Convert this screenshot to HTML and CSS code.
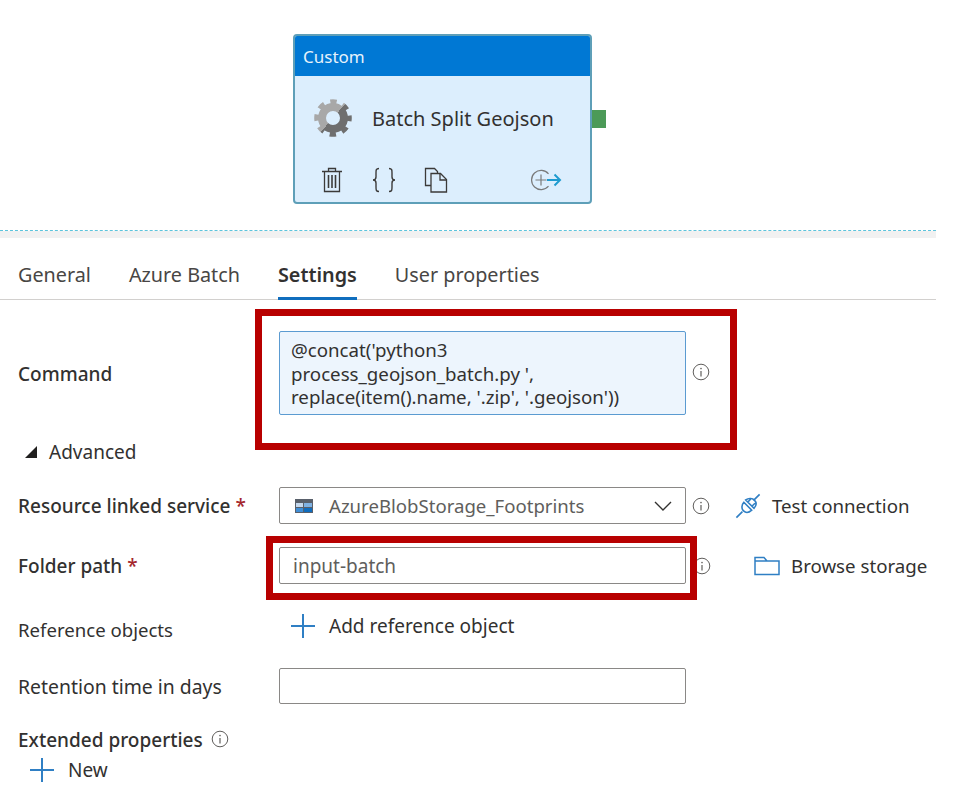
FILE: index.html
```html
<!DOCTYPE html>
<html lang="en">
<head>
    <meta charset="UTF-8">
    <title>Batch Split Geojson</title>
    <link rel="stylesheet" href="styles.css">
</head>
<body>
    <svg class="defs" width="0" height="0">
        <symbol id="info" viewBox="0 0 18 18">
            <circle cx="9" cy="9" r="7.8" fill="none" stroke="#605e5c" stroke-width="1"/>
            <path d="M9 8v5.5" stroke="#605e5c" stroke-width="1.2" fill="none"/>
            <circle cx="9" cy="5.6" r="0.8" fill="#605e5c"/>
        </symbol>
        <symbol id="plus" viewBox="0 0 24 24">
            <path d="M12 0v24M0 12h24" stroke="#2f7fc4" stroke-width="2" fill="none"/>
        </symbol>
        <linearGradient id="gear-tone" gradientUnits="userSpaceOnUse" x1="4" y1="6" x2="34" y2="32">
            <stop offset="0.5" stop-color="#a8a8a8"/>
            <stop offset="0.5" stop-color="#6f6f6f"/>
        </linearGradient>
    </svg>

    <div class="canvas">
        <div class="node-wrap">
            <div class="node">
                <div class="node-type">Custom</div>
                <div class="node-body">
                    <svg class="gear" width="38" height="38" viewBox="0 0 38 38">
                        <circle cx="19" cy="19" r="16.3" fill="none" stroke="url(#gear-tone)" stroke-width="5" stroke-dasharray="6.4 6.4" stroke-dashoffset="3.2"/>
                        <circle cx="19" cy="19" r="11" fill="none" stroke="url(#gear-tone)" stroke-width="8"/>
                    </svg>
                    <span class="node-name">Batch Split Geojson</span>
                </div>
                <div class="node-actions">
                    <svg width="22" height="26" viewBox="0 0 22 26" fill="none" stroke="#3b3a39" stroke-width="1.3">
                        <path d="M1 4.5h20M7.5 4.5V1.5h7v3M3.5 4.5v20h15v-20"/>
                        <path d="M7.5 8v13M11 8v13M14.5 8v13" stroke-width="1.6"/>
                    </svg>
                    <svg class="braces" width="24" height="26" viewBox="0 0 24 26" fill="none" stroke="#3b3a39" stroke-width="1.4">
                        <path d="M7 1.500C4 1.500 4 3 4 6v4c0 2-1 3-3 3 2 0 3 1 3 3v4c0 3 0 4.500 3 4.500"/>
                        <path d="M17 1.500c3 0 3 1.500 3 4.500v4c0 2 1 3 3 3-2 0-3 1-3 3v4c0 3 0 4.500-3 4.500"/>
                    </svg>
                    <svg class="copy-icon" width="24" height="26" viewBox="0 0 24 26" fill="none" stroke="#3b3a39" stroke-width="1.3">
                        <path d="M7 18.500H1.500V1.500h9l3 3v2"/>
                        <path d="M7 6.500h9.500l6 6v12.500H7z"/>
                        <path d="M16 6.500v6.500h6.500"/>
                    </svg>
                    <svg class="add-icon" width="32" height="22" viewBox="0 0 32 22" fill="none">
                        <path d="M18.500 4.800A9.600 9.600 0 1 0 18.500 17.200" stroke="#7a7a7a" stroke-width="1.2"/>
                        <path d="M5.500 11h11M11 5.500v11" stroke="#7a7a7a" stroke-width="1.2"/>
                        <path d="M17 11h13M24.500 5.500l5.500 5.500-5.500 5.500" stroke="#1f9bcf" stroke-width="2"/>
                    </svg>
                </div>
            </div>
            <div class="node-port"></div>
        </div>
    </div>

    <div class="panel">
        <div class="tabs">
            <span class="tab">General</span>
            <span class="tab">Azure Batch</span>
            <span class="tab active">Settings</span>
            <span class="tab">User properties</span>
        </div>

        <div class="row row-command">
            <label class="field-label strong">Command</label>
            <div class="boxed">
                <div class="textbox">@concat('python3<br>process_geojson_batch.py ',<br>replace(item().name, '.zip', '.geojson'))</div>
                <div class="red-box red-command"></div>
            </div>
            <svg class="info"><use href="#info"/></svg>
        </div>

        <div class="advanced"><span class="caret"></span>Advanced</div>

        <div class="row row-resource">
            <label class="field-label strong">Resource linked service <span class="req">*</span></label>
            <div class="input select">
                <svg width="18" height="16" viewBox="0 0 18 16">
                    <path d="M0 1h18v14H0z" fill="#59606b"/>
                    <path d="M1 5h7v4H1z" fill="#c5d9ee"/>
                    <path d="M9 5h8v4H9z" fill="#7fb2e3"/>
                    <path d="M1 10h7v4H1z" fill="#3f8ed6"/>
                    <path d="M9 10h8v4H9z" fill="#0f6cbd"/>
                </svg>
                <span class="select-value">AzureBlobStorage_Footprints</span>
                <svg class="chevron" width="20" height="12" viewBox="0 0 20 12"><path d="M2 2l8 8 8-8" fill="none" stroke="#323130" stroke-width="1.400"/></svg>
            </div>
            <svg class="info"><use href="#info"/></svg>
            <svg class="plug" width="26" height="28" viewBox="0 0 28 28" fill="none" stroke="#2f7fc4" stroke-width="1.700">
                <path d="M1.500 26.500l6.500-6.500M26.500 1.500L20 8"/>
                <path d="M9.500 10l8.500 8.500c-3 2.700-6.500 3-8.800.8S6.800 13 9.500 10z"/>
                <path d="M14 9.500l3-3M18.500 14l3-3M11.500 7.500l9 9c2.500-3 2.700-6.500.6-8.600S15 5 11.500 7.500z"/>
            </svg>
            <span class="link-action">Test connection</span>
        </div>

        <div class="row row-folder">
            <label class="field-label strong">Folder path <span class="req">*</span></label>
            <div class="boxed">
                <div class="input placeholder">input-batch</div>
                <div class="red-box red-folder"></div>
            </div>
            <svg class="info"><use href="#info"/></svg>
            <svg class="folder" width="26" height="20" viewBox="0 0 26 20" fill="none" stroke="#2f7fc4" stroke-width="1.500">
                <path d="M1 18.500V1.500h9l3 3.500h12v13.500zM1 5h12"/>
            </svg>
            <span class="link-action">Browse storage</span>
        </div>

        <div class="row row-reference">
            <label class="field-label small">Reference objects</label>
            <div class="add-ref">
                <svg class="plus"><use href="#plus"/></svg>
                <span>Add reference object</span>
            </div>
        </div>

        <div class="row row-retention">
            <label class="field-label wide">Retention time in days</label>
            <div class="input"></div>
        </div>

        <div class="extended strong">Extended properties <svg class="info"><use href="#info"/></svg></div>
        <div class="add-new">
            <svg class="plus"><use href="#plus"/></svg>
            <span>New</span>
        </div>
    </div>
</body>
</html>
```

FILE: styles.css
```css
body {
    margin: 0;
    background-color: #fff;
    color: #323130;
    font-family: "Noto Sans", "Open Sans", Arial, sans-serif;
    font-size: 19px;
}
.defs {
    position: absolute;
}
.canvas {
    height: 231px;
    width: 936px;
    box-sizing: border-box;
    padding: 34px 0 0 293px;
    border-bottom: 1px dashed #5cc4dc;
}
.node-wrap {
    display: flex;
    align-items: center;
}
.node {
    width: 299px;
    height: 170px;
    box-sizing: border-box;
    border: 2px solid #5e9fb8;
    border-radius: 4px;
    background-color: #dceefd;
    overflow: hidden;
}
.node-type {
    height: 40px;
    padding-left: 8px;
    line-height: 42px;
    font-size: 17px;
    color: #e6f2fb;
    background-color: #0078d4;
}
.node-body {
    display: flex;
    align-items: center;
    height: 84px;
    padding-left: 19px;
}
.node-name {
    margin-left: 20px;
    font-size: 20px;
}
.node-actions {
    display: flex;
    align-items: center;
    height: 40px;
    padding-left: 26px;
}
.braces {
    margin-left: 29px;
}
.copy-icon {
    margin-left: 28px;
}
.add-icon {
    margin-left: 82px;
}
.node-port {
    width: 14px;
    height: 18px;
    margin-top: -1px;
    background-color: #4c9a58;
}
.panel {
    width: 936px;
    height: 563px;
    box-sizing: border-box;
    border-top: 7px solid #f1f1f1;
}
.tabs {
    display: flex;
    gap: 38px;
    height: 62px;
    box-sizing: border-box;
    padding: 22px 0 0 18px;
    border-bottom: 1px solid #d2d0ce;
    font-size: 19.800px;
}
.tab {
    height: 40px;
    line-height: 30px;
    color: #484644;
}
.tab.active {
    color: #323130;
    font-weight: 600;
    border-bottom: 3px solid #106ebe;
    height: 37px;
}
.row {
    display: flex;
    align-items: center;
}
.field-label {
    width: 261px;
    margin-left: 18px;
    flex-shrink: 0;
}
.small {
    font-size: 18.600px;
}
.wide {
    font-size: 19.400px;
}
.strong {
    font-weight: 500;
}
.req {
    color: #a4262c;
}
.boxed {
    position: relative;
}
.textbox {
    width: 407px;
    height: 84px;
    box-sizing: border-box;
    padding: 6px 11px;
    border: 1px solid #5b9bd1;
    border-radius: 2px;
    background-color: #edf5fd;
    line-height: 23.500px;
    font-size: 18.700px;
    white-space: nowrap;
}
.red-box {
    position: absolute;
    box-sizing: border-box;
    border: 7px solid #b80000;
}
.red-command {
    left: -24px;
    top: -22px;
    width: 482px;
    height: 141px;
}
.red-folder {
    left: -13px;
    top: -11px;
    width: 431px;
    height: 64px;
}
.info {
    width: 18px;
    height: 18px;
    margin-left: 7px;
    flex-shrink: 0;
}
.row-command {
    margin-top: 31px;
}
.row-command .field-label {
    margin-top: 2px;
}
.row-command .info {
    margin-top: -3px;
    margin-left: 6px;
}
.advanced {
    display: flex;
    align-items: center;
    margin: 24px 0 0 25px;
    height: 26px;
}
.caret {
    width: 0;
    height: 0;
    margin-right: 12px;
    border-left: 12px solid transparent;
    border-bottom: 12px solid #201f1e;
}
.input {
    width: 407px;
    height: 37px;
    box-sizing: border-box;
    display: flex;
    align-items: center;
    padding: 0 13px;
    border: 1px solid #8a8886;
    border-radius: 2px;
    background-color: #fff;
}
.placeholder {
    color: #605e5c;
}
.select svg:first-child {
    margin-left: 2px;
}
.select-value {
    margin-left: 16px;
    font-size: 18.600px;
    color: #605e5c;
}
.chevron {
    margin-left: auto;
    margin-right: -1px;
}
.row-resource {
    margin-top: 22px;
}
.row-resource .field-label {
    margin-top: 1px;
}
.row-resource .info {
    margin-left: 6px;
}
.plug {
    margin-left: 25px;
}
.link-action {
    margin-left: 11px;
    font-size: 18.700px;
}
.row-folder {
    margin-top: 23px;
}
.folder {
    margin-left: 43px;
}
.row-reference {
    margin-top: 30px;
    align-items: flex-start;
}
.row-reference .field-label {
    margin-top: 3px;
}
.add-ref {
    display: flex;
    align-items: center;
    margin-left: 12px;
    height: 24px;
}
.plus {
    width: 24px;
    height: 24px;
    flex-shrink: 0;
}
.add-ref span {
    margin-left: 14px;
}
.row-retention {
    margin-top: 26px;
}
.row-retention .input {
    height: 36px;
}
.extended {
    display: flex;
    align-items: center;
    margin: 23px 0 0 18px;
    height: 26px;
}
.extended .info {
    margin-left: 8px;
    margin-top: -3px;
}
.add-new {
    display: flex;
    align-items: center;
    margin: 5px 0 0 30px;
    height: 24px;
}
.add-new span {
    margin-left: 14px;
}
```
